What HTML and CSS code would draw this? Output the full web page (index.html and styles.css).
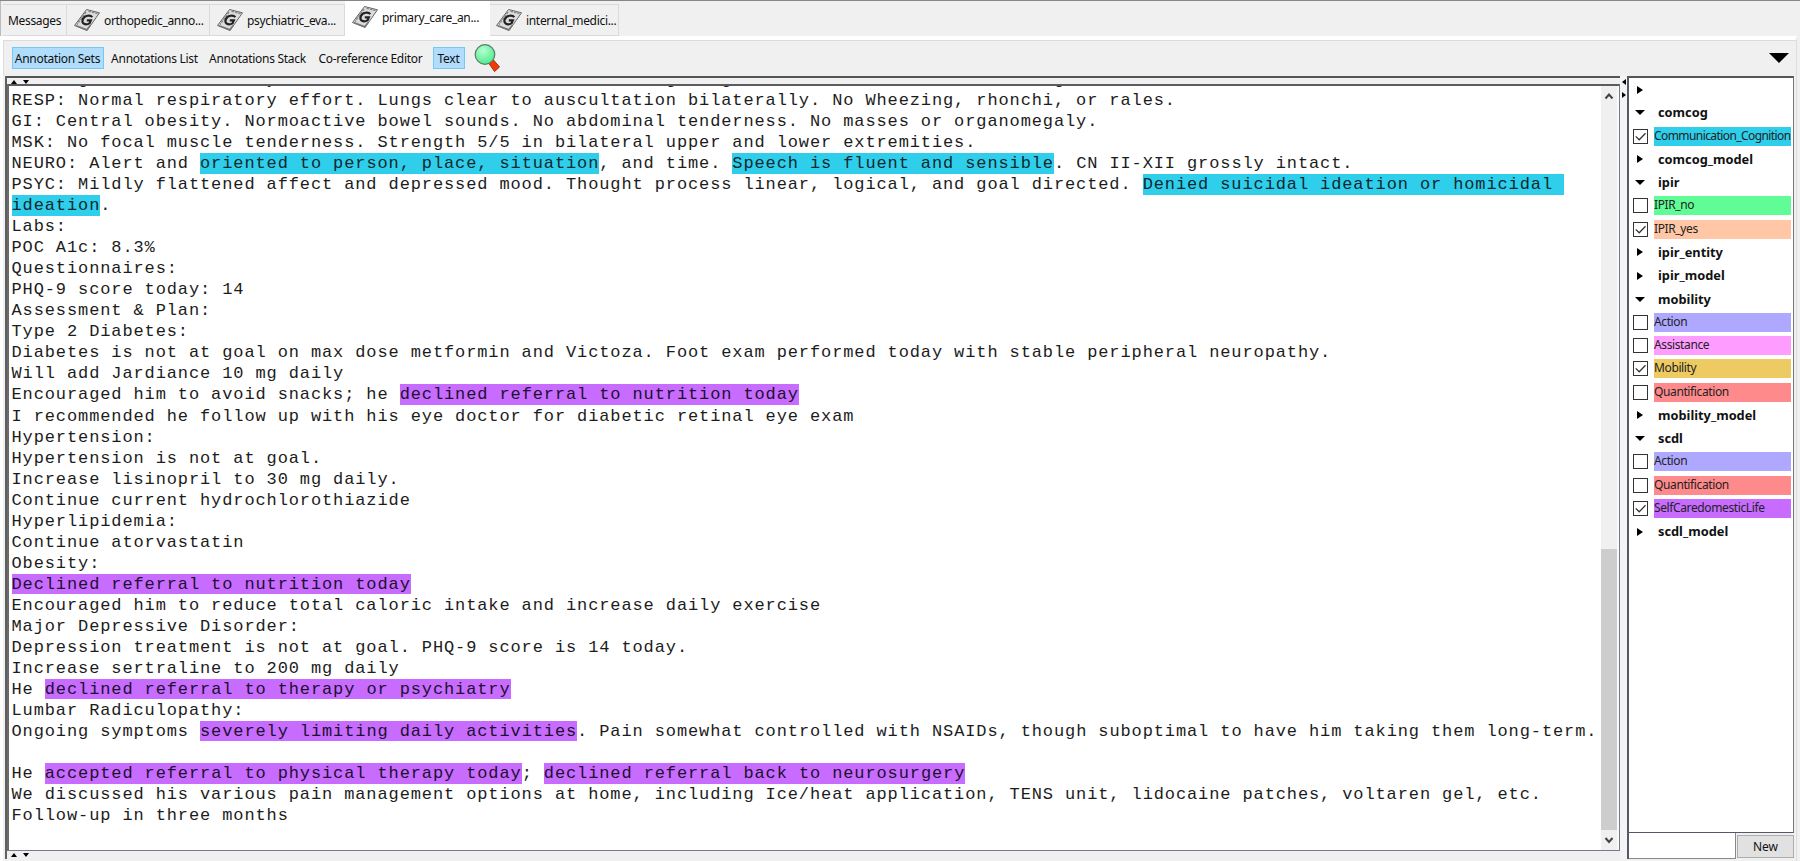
FILE: index.html
```
<!DOCTYPE html>
<html lang="en">
<head>
<meta charset="utf-8">
<title>Annotation Viewer</title>
<link rel="stylesheet" href="styles.css">
</head>
<body>
<svg class="defs" width="0" height="0">
  <symbol id="doc" viewBox="0 0 28 24">
    <path d="M13.500 1.500 26.500 4.800 14 22.500 1.500 17.500Z" fill="#dcdcdc" stroke="#666" stroke-width="1"/>
    <path d="M15.500 3.300 24.500 5.500M13 4 4 16.500" stroke="#888" stroke-width="1.500" stroke-dasharray="2.500 1" fill="none"/>
    <path d="M3 17.600 14 21.800 17 17.500" stroke="#777" stroke-width="1.500" fill="none"/>
    <path d="M19.300 9.200C17.300 6.600 11.500 7.300 9.800 11.200C8.200 15.600 12.400 17.700 16.500 15.400L17.800 12.400H13.800" fill="none" stroke="#222" stroke-width="2.200"/>
  </symbol>
  <symbol id="check" viewBox="0 0 15 15"><path d="M2 7.300 6 11.300 13.300 3.800" fill="none" stroke="#333" stroke-width="1.400"/></symbol>
</svg>
<div class="app">
  <nav class="tabs">
    <div class="tab tab-messages"><span>Messages</span></div>
    <div class="tab tab-a"><svg><use href="#doc"/></svg><span>orthopedic_anno...</span></div>
    <div class="tab tab-b"><svg><use href="#doc"/></svg><span>psychiatric_eva...</span></div>
    <div class="tab tab-c active"><svg><use href="#doc"/></svg><span>primary_care_an...</span></div>
    <div class="tab tab-d"><svg><use href="#doc"/></svg><span>internal_medici...</span></div>
  </nav>
  <div class="panel">
    <div class="toolbar">
      <span class="tool w-sets on"><span>Annotation Sets</span></span>
      <span class="tool w-list"><span>Annotations List</span></span>
      <span class="tool w-stack"><span>Annotations Stack</span></span>
      <span class="tool w-coref"><span>Co-reference Editor</span></span>
      <span class="tool w-text on"><span>Text</span></span>
      <svg class="search" viewBox="0 0 26 28"><defs><radialGradient id="lens" cx=".4" cy=".3" r=".75"><stop offset="0" stop-color="#b4ffd0"/><stop offset="1" stop-color="#4bea8c"/></radialGradient></defs><path d="M15 19.500 19.500 16 25.500 23 20.500 27.500Z" fill="#f03a08" stroke="#a82a08"/><circle cx="11" cy="10.500" r="9.800" fill="url(#lens)" stroke="#5a7a66" stroke-width="1.200"/></svg>
      <i class="menu-arrow"></i>
    </div>
    <div class="main">
      <section class="doc">
        <div class="split top"><i class="up"></i><i class="down"></i></div>
        <div class="viewer">
          <div class="text">
<p class="clipped">CV: Regular rate and rhythm                                g    g                             g</p>
<p>RESP: Normal respiratory effort. Lungs clear to auscultation bilaterally. No Wheezing, rhonchi, or rales.</p>
<p>GI: Central obesity. Normoactive bowel sounds. No abdominal tenderness. No masses or organomegaly.</p>
<p>MSK: No focal muscle tenderness. Strength 5/5 in bilateral upper and lower extremities.</p>
<p>NEURO: Alert and <mark class="cyan">oriented to person, place, situation</mark>, and time. <mark class="cyan">Speech is fluent and sensible</mark>. CN II-XII grossly intact.</p>
<p>PSYC: Mildly flattened affect and depressed mood. Thought process linear, logical, and goal directed. <mark class="cyan">Denied suicidal ideation or homicidal </mark></p>
<p><mark class="cyan">ideation</mark>.</p>
<p>Labs:</p>
<p>POC A1c: 8.3%</p>
<p>Questionnaires:</p>
<p>PHQ-9 score today: 14</p>
<p>Assessment &amp; Plan:</p>
<p>Type 2 Diabetes:</p>
<p>Diabetes is not at goal on max dose metformin and Victoza. Foot exam performed today with stable peripheral neuropathy.</p>
<p>Will add Jardiance 10 mg daily</p>
<p>Encouraged him to avoid snacks; he <mark>declined referral to nutrition today</mark></p>
<p>I recommended he follow up with his eye doctor for diabetic retinal eye exam</p>
<p>Hypertension:</p>
<p>Hypertension is not at goal.</p>
<p>Increase lisinopril to 30 mg daily.</p>
<p>Continue current hydrochlorothiazide</p>
<p>Hyperlipidemia:</p>
<p>Continue atorvastatin</p>
<p>Obesity:</p>
<p><mark>Declined referral to nutrition today</mark></p>
<p>Encouraged him to reduce total caloric intake and increase daily exercise</p>
<p>Major Depressive Disorder:</p>
<p>Depression treatment is not at goal. PHQ-9 score is 14 today.</p>
<p>Increase sertraline to 200 mg daily</p>
<p>He <mark>declined referral to therapy or psychiatry</mark></p>
<p>Lumbar Radiculopathy:</p>
<p>Ongoing symptoms <mark>severely limiting daily activities</mark>. Pain somewhat controlled with NSAIDs, though suboptimal to have him taking them long-term.</p>
<p></p>
<p>He <mark>accepted referral to physical therapy today</mark>; <mark>declined referral back to neurosurgery</mark></p>
<p>We discussed his various pain management options at home, including Ice/heat application, TENS unit, lidocaine patches, voltaren gel, etc.</p>
<p>Follow-up in three months</p>
          </div>
          <div class="scroll">
            <svg viewBox="0 0 16 20"><path d="M4.500 12.500 8 8.500 11.500 12.500" /></svg>
            <div class="track"><div class="thumb"></div></div>
            <svg viewBox="0 0 16 20"><path d="M4.500 8 8 12 11.500 8"/></svg>
          </div>
        </div>
        <div class="split bottom"><i class="up"></i><i class="down"></i></div>
      </section>
      <div class="vsplit"><i class="left"></i><i class="right"></i></div>
      <aside class="side">
        <div class="tree">
          <div class="row group"><i class="right"></i></div>
          <div class="row group"><i class="down"></i><b>comcog</b></div>
          <div class="row"><span class="box"><svg><use href="#check"/></svg></span><span class="label cyan tight">Communication_Cognition</span></div>
          <div class="row group"><i class="right"></i><b>comcog_model</b></div>
          <div class="row group"><i class="down"></i><b>ipir</b></div>
          <div class="row"><span class="box"></span><span class="label green">IPIR_no</span></div>
          <div class="row"><span class="box"><svg><use href="#check"/></svg></span><span class="label peach">IPIR_yes</span></div>
          <div class="row group"><i class="right"></i><b>ipir_entity</b></div>
          <div class="row group"><i class="right"></i><b>ipir_model</b></div>
          <div class="row group"><i class="down"></i><b>mobility</b></div>
          <div class="row"><span class="box"></span><span class="label lilac">Action</span></div>
          <div class="row"><span class="box"></span><span class="label pink">Assistance</span></div>
          <div class="row"><span class="box"><svg><use href="#check"/></svg></span><span class="label gold">Mobility</span></div>
          <div class="row"><span class="box"></span><span class="label red">Quantification</span></div>
          <div class="row group"><i class="right"></i><b>mobility_model</b></div>
          <div class="row group"><i class="down"></i><b>scdl</b></div>
          <div class="row"><span class="box"></span><span class="label lilac">Action</span></div>
          <div class="row"><span class="box"></span><span class="label red">Quantification</span></div>
          <div class="row"><span class="box"><svg><use href="#check"/></svg></span><span class="label purple">SelfCaredomesticLife</span></div>
          <div class="row group"><i class="right"></i><b>scdl_model</b></div>
        </div>
        <div class="new-row"><div class="field"></div><div class="new">New</div></div>
      </aside>
    </div>
  </div>
</div>
</body>
</html>
```

FILE: styles.css
```
* { box-sizing: border-box; }
body { margin: 0; background: #f0f0f0; font-family: "Noto Sans", "Open Sans", sans-serif; font-size: 12px; color: #111; }
.defs { display: block; width: 0; height: 0; }
.app { height: 861px; display: flex; flex-direction: column; border-top: 1px solid #868686; overflow: hidden; }

.tabs { display: flex; align-items: flex-end; height: 35px; padding-left: 2px; border-left: 1px solid #bbb; flex: none; }
.tab { display: flex; align-items: center; height: 32px; border: 1px solid #dadada; border-left: 0; padding-left: 6px; white-space: nowrap; }
.tab svg { width: 28px; height: 24px; margin-right: 3px; flex: none; }
.tab span { letter-spacing: -0.32px; }
.tab-messages { width: 64px; padding-left: 5px; }
.tab-a { width: 143px; }
.tab-b { width: 135px; }
.tab-c { width: 145px; }
.tab-d { width: 129px; padding-left: 5px; }
.tab.active { height: 35px; background: #fff; border: 0; padding-bottom: 3px; }

.panel { flex: 1; min-height: 0; margin-right: 3px; border-left: 3px solid #fff; border-top: 4px solid #fff; border-right: 1px solid #ddd; display: flex; flex-direction: column; }
.toolbar { height: 36px; flex: none; display: flex; align-items: center; border-top: 1px solid #dcdcdc; border-left: 1px solid #dcdcdc; padding: 0 7px 1px 8px; }
.tool { display: flex; align-items: center; justify-content: center; height: 22px; border: 1px solid transparent; white-space: nowrap; letter-spacing: -0.28px; flex: none; padding-right: 1px; }
.tool.on { background: #b0ddfb; border-color: #74c8f6; }
.w-sets { width: 92px; }
.w-list { width: 102px; }
.w-stack { width: 104px; }
.w-coref { width: 122px; }
.w-text { width: 32px; margin-left: 1px; }
.search { width: 26px; height: 28px; margin-left: 9px; }
.menu-arrow { margin-left: auto; margin-right: 0; border: 10px solid transparent; border-top: 10px solid #000; border-bottom: 0; }

.main { flex: 1; min-height: 0; display: flex; padding: 0 2px 2px 2px; }
.doc { width: 1615px; flex: none; display: flex; flex-direction: column; border-left: 2px solid #606060; }
.split { height: 8px; flex: none; display: flex; gap: 6px; align-items: center; padding-left: 4px; }
.split.top { border-top: 2px solid #555; padding-top: 2px; }
.split i { flex: none; }
.split .up { border: 3px solid transparent; border-bottom: 4px solid #000; border-top: 0; }
.split .down { border: 3px solid transparent; border-top: 4px solid #000; border-bottom: 0; }
.viewer { flex: 1; min-height: 0; display: flex; border: 1px solid #777b88; border-top: 2px solid #5c5c60; border-left: 2px solid #6a6a6a; background: #fff; overflow: hidden; }
.text { flex: 1; min-width: 0; padding-left: 2.500px; overflow: hidden; font: 17px/21.045px "Liberation Mono", "Courier New", monospace; letter-spacing: 0.888px; color: #1c1c1c; }
.text p { margin: 0; height: 21.045px; white-space: pre; }
.text .clipped { margin-top: -17px; }
mark { display: inline-block; height: 20.500px; background: #c86cff; color: #201030; vertical-align: top; }
mark.cyan { background: #2fcfec; color: #10282e; }
.scroll { width: 18px; margin-right: 0; background: #f0f0f0; border-right: 2px solid #fafafa; display: flex; flex-direction: column; }
.scroll svg { width: 16px; height: 20px; fill: none; stroke: #444; stroke-width: 2; flex: none; }
.track { flex: 1; display: flex; align-items: flex-end; }
.thumb { width: 16px; height: 281px; background: #cdcdcd; }

.vsplit { width: 7px; flex: none; display: flex; flex-direction: column; gap: 7px; align-items: center; padding-top: 3px; background: #f4f4f4; }
.vsplit .left { border: 3px solid transparent; border-right: 4px solid #000; border-left: 0; }
.vsplit .right { border: 3px solid transparent; border-left: 4px solid #000; border-right: 0; }

.side { flex: 1; display: flex; flex-direction: column; border-left: 2px solid #555866; }
.tree { flex: 1; background: #fff; border-top: 2px solid #555; border-right: 1px solid #777; border-bottom: 1px solid #555866; }
.row { height: 23.270px; display: flex; align-items: center; padding-left: 4px; }
.box { width: 15px; height: 15px; border: 1px solid #333; flex: none; display: flex; margin-right: 6px; }
.box svg { width: 13px; height: 13px; }
.label { width: 137px; height: 19px; line-height: 18px; white-space: nowrap; letter-spacing: -0.38px; color: #222; }
.label.tight { letter-spacing: -0.58px; }
.group i { flex: none; }
.group .right { border: 4.500px solid transparent; border-left: 6px solid #000; border-right: 0; margin-left: 4px; margin-right: 15px; }
.group .down { border: 5px solid transparent; border-top: 5px solid #000; border-bottom: 0; margin-left: 2px; margin-right: 13px; }
.group b { font-size: 12.800px; letter-spacing: 0; line-height: 18px; margin-top: -1px; }
.cyan { background: #2fcfec; }
.green { background: #60fd97; }
.peach { background: #ffc7a6; }
.lilac { background: #aea8ff; }
.pink { background: #ff9cff; }
.gold { background: #eecb62; }
.red { background: #ff8a8c; }
.purple { background: #c86cff; }
.new-row { height: 26px; display: flex; align-items: center; }
.field { width: 107px; height: 26px; background: #fff; border-right: 1px solid #888; border-bottom: 1px solid #888; }
.new { width: 57px; height: 23px; margin-left: 1px; background: #e1e1e1; border: 1px solid #adadad; display: flex; align-items: center; justify-content: center; }
```
